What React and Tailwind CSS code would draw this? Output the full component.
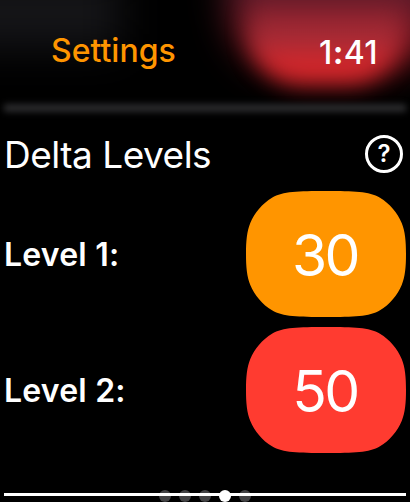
const levels = [
  { label: "Level 1:", value: 30, color: "text-[#ff9500]" },
  { label: "Level 2:", value: 50, color: "text-[#ff3b30]" },
];

const pages = [0, 1, 2, 3, 4];
const currentPage = 3;

function HeaderGlow() {
  return (
    <div className="absolute inset-0 overflow-hidden">
      <div className="absolute -left-10 -top-6 h-[72px] w-[160px] bg-[#151518] blur-[20px]" />
      <div className="absolute left-[228px] -top-[90px] h-[160px] w-[212px] rounded-[70px] bg-linear-to-b from-[#5c1a29] from-55% to-[#b01c25] to-90% blur-[18px]" />
      <div className="absolute left-[250px] -top-[50px] h-[134px] w-[150px] rounded-[52px] bg-linear-to-b from-[#541c2a]/0 from-36% via-[#a42c37] via-66% to-[#d2262a] to-84% blur-[11px]" />
      <div className="absolute left-1 right-1 top-[104px] h-[8px] bg-[#2b2b2d] blur-[3px]" />
    </div>
  );
}

function Header() {
  return (
    <header className="relative h-[119px] shrink-0">
      <HeaderGlow />
      <div className="relative flex justify-between pl-[51px] pr-[32px] pt-[31px] text-[32px] leading-10 font-medium">
        <h1 className="text-[#ff9500]">Settings</h1>
        <span className="pt-[2px] tracking-[0.4px]">
          1<span className="font-bold">:</span>41
        </span>
      </div>
    </header>
  );
}

function LevelButton({ value, color }) {
  return (
    <button className={`relative h-[126px] w-[160px] ${color}`}>
      <svg
        className="absolute inset-0"
        width="160"
        height="126"
        viewBox="0 0 160 126"
        fill="currentColor"
      >
        <path d="M0 63C0 50 .9 40.2 4.3 32C8.5 21.9 16.5 12.3 26 6.7C37 .2 52 0 80 0S123 .2 134 6.7C143.5 12.3 151.5 21.9 155.7 32C159.1 40.2 160 50 160 63S159.1 85.8 155.7 94C151.5 104.1 143.5 113.7 134 119.3C123 125.8 108 126 80 126S37 125.8 26 119.3C16.5 113.7 8.5 104.1 4.3 94C.9 85.8 0 76 0 63Z" />
      </svg>
      <span className="relative block pt-[3px] pr-[2px] text-[57px] leading-none tracking-[-2.5px] text-white">
        {value}
      </span>
    </button>
  );
}

export default function App() {
  return (
    <main className="relative flex h-[502px] w-[410px] flex-col overflow-hidden bg-black font-['Inter',sans-serif] text-white">
      <Header />
      <div className="flex h-[72px] shrink-0 items-center justify-between pb-[2px] pl-1 pr-[7px]">
        <h2 className="text-[37px] leading-none tracking-[-0.5px]">
          Delta Levels
        </h2>
        <button className="flex size-[38px] items-center justify-center rounded-full border-3 border-white text-[24px] leading-none font-semibold">
          ?
        </button>
      </div>
      <div className="flex flex-col gap-[10px] pl-1 pr-1">
        {levels.map((level) => (
          <div key={level.label} className="flex items-center justify-between">
            <span className="pt-[2px] text-[32px] leading-none font-semibold tracking-[0.2px]">
              {level.label}
            </span>
            <LevelButton value={level.value} color={level.color} />
          </div>
        ))}
      </div>
      <div className="absolute bottom-0 left-0 flex w-full justify-center gap-2">
        {pages.map((page) => (
          <span
            key={page}
            className={`size-3 rounded-full ${
              page === currentPage ? "bg-white" : "bg-[#424244]"
            }`}
          />
        ))}
      </div>
      <div className="relative mx-1 mt-10 h-[3px] shrink-0 bg-white" />
    </main>
  );
}
